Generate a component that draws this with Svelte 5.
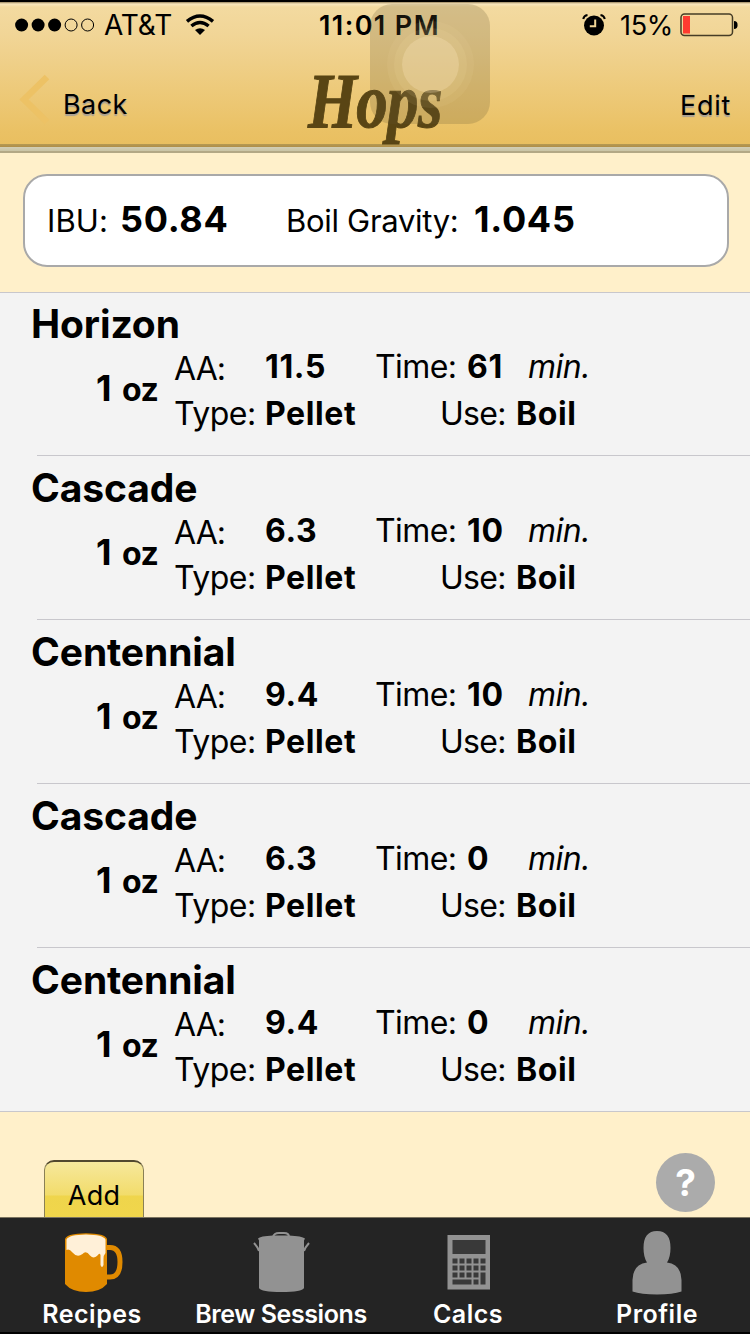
<script>
  const hops = [
    { name: 'Horizon', aa: '11.5', time: '61' },
    { name: 'Cascade', aa: '6.3', time: '10' },
    { name: 'Centennial', aa: '9.4', time: '10' },
    { name: 'Cascade', aa: '6.3', time: '0' },
    { name: 'Centennial', aa: '9.4', time: '0' }
  ];
  const keys = [0, 1, 2, 3, 4];
</script>

<div class="screen">
  <header>
    <div class="status">
      <svg class="signal" width="80" height="14" viewBox="0 0 80 14">
        {#each keys as i}
          <circle cx={6.6 + i * 16.5} cy="7" r={i < 3 ? 6.5 : 6} class:empty={i > 2} />
        {/each}
      </svg>
      <span class="carrier">AT&amp;T</span>
      <svg class="wifi" width="30" height="22" viewBox="0 0 30 22">
        <path d="M2 7.4 Q15 -3.6 28 7.4" />
        <path d="M6.4 12 Q15 4.8 23.6 12" />
        <path class="dot" d="M10 16 Q15 12.3 20 16 L15 21Z" />
      </svg>
      <span class="clock">11:01 PM</span>
      <svg class="alarm" width="24" height="22" viewBox="0 0 24 22">
        <circle cx="12" cy="11.5" r="10" />
        <path class="ear" d="M1.2 5 Q2 1.5 5.5 1 M18.5 1 Q22 1.5 22.8 5" />
        <path class="hand" d="M13.2 5.5 V12.3 H7.8" />
      </svg>
      <span class="percent">15%</span>
      <svg class="battery" width="58" height="24" viewBox="0 0 58 24">
        <rect class="case" x="1" y="1" width="51.5" height="21.5" rx="3.5" />
        <rect class="level" x="3" y="3" width="7" height="17.5" />
        <path d="M54 8 Q57.6 8 57.6 12 Q57.6 16 54 16Z" />
      </svg>
    </div>
    <nav>
      <svg class="chevron" width="32" height="52" viewBox="0 0 32 52">
        <path d="M28 3 L5 25.5 L28 48" />
      </svg>
      <span class="back">Back</span>
      <h1>Hops</h1>
      <span class="edit">Edit</span>
    </nav>
    <div class="touch"><i></i></div>
  </header>

  <section class="summary">
    <div class="box">
      <span class="ibu">IBU:</span><b class="ibu-value">50.84</b>
      <span class="gravity">Boil Gravity:</span><b class="gravity-value">1.045</b>
    </div>
  </section>

  <ul>
    {#each hops as hop}
      <li>
        <h2>{hop.name}</h2>
        <div class="details">
          <div class="amount"><b>1</b><span>oz</span></div>
          <div class="lines">
            <div class="line">
              <span class="aa">AA:</span>
              <b class="kind">{hop.aa}</b>
              <span class="time">Time:</span>
              <b class="minutes">{hop.time}</b>
              <em>min.</em>
            </div>
            <div class="line">
              <span class="type">Type:</span>
              <b class="kind">Pellet</b>
              <span class="use">Use:</span>
              <b class="boil">Boil</b>
            </div>
          </div>
        </div>
      </li>
    {/each}
  </ul>

  <section class="actions">
    <button class="add">Add</button>
    <button class="help">?</button>
  </section>

  <footer>
    <div class="tab recipes">
      <svg width="60" height="64" viewBox="0 0 60 64">
        <path class="handle" d="M42 16.5 H46 Q56 16.5 56 31 Q56 46 46 46 H42" />
        <path class="beer" d="M1 8 Q3 2.5 22 2.3 Q41 2.5 43 8 V53 Q36 61 22 61 Q8 61 1 53Z" />
        <path class="foam" d="M2.5 8.5 Q5 3.7 22 3.5 Q39 3.7 41.5 8.5 V22 Q39.5 24 39.5 28 V34 Q38 38 36.5 34 V24 Q35.5 21.5 34 24 Q30 28.5 26 24.5 Q22 19 18.5 23 Q13 27 8.5 21.5 Q5 17 2.5 19Z" />
      </svg>
      <span>Recipes</span>
    </div>
    <div class="tab brew">
      <svg width="60" height="64" viewBox="0 0 60 64">
        <path class="thin" d="M22 6 Q23 2 28 2 H33 Q38 2 38 6" />
        <path d="M7 7.5 Q9 5 22 4.5 H38 Q51 5 54 7.5 L53 9.5 V57 Q51 61 30.5 61 Q10 61 8 57 V9.5Z" />
        <path class="thin" d="M8 20 Q7 16.5 3 12 M53 20 Q54 16.5 58 12" />
      </svg>
      <span>Brew Sessions</span>
    </div>
    <div class="tab calcs">
      <svg width="60" height="64" viewBox="0 0 60 64">
        <path d="M8.5 4 H51 V58.5 H8.5Z" />
        <rect class="hole" x="13.5" y="9" width="33" height="14" />
        {#each keys as col}
          {#each keys.slice(0, col === 4 ? 2 : 3) as row}
            <rect class="hole" x={13.5 + col * 7} y={27.5 + row * 7} width="5" height="5" />
          {/each}
        {/each}
        <rect class="hole" x="13.5" y="48.5" width="19" height="5" />
        <rect class="hole" x="34.5" y="48.5" width="5" height="5" />
        <rect class="hole" x="41.5" y="41.5" width="5" height="12" />
      </svg>
      <span>Calcs</span>
    </div>
    <div class="tab profile">
      <svg width="60" height="64" viewBox="0 0 60 64">
        <path d="M30 0 Q43.5 0 43.5 17 Q43.5 26 40 31.5 Q54 33 54.5 49 V60.5 Q46 63.5 30 63.5 Q14 63.5 5.5 60.5 V49 Q6 33 20 31.5 Q16.5 26 16.5 17 Q16.5 0 30 0Z" />
      </svg>
      <span>Profile</span>
    </div>
  </footer>
</div>

<style>
  :global(body) {
    margin: 0;
  }
  .screen {
    width: 750px;
    height: 1334px;
    overflow: hidden;
    display: flex;
    flex-direction: column;
    background: #fff0ca;
    color: #000;
    font-family: Inter, "Liberation Sans", sans-serif;
  }
  header {
    position: relative;
    box-sizing: border-box;
    height: 153px;
    flex: none;
    border-top: 2px solid #000;
    background:
      linear-gradient(#b59a53, #b08e48) 0 142px / 100% 3px no-repeat,
      linear-gradient(#d2ceb5, #cac4a5) 0 145px / 100% 4px no-repeat,
      linear-gradient(#b3a885, #b3a885) 0 149px / 100% 2px no-repeat,
      linear-gradient(#97835c 0, #f9e7bd 2px, #f3daa0 5px, #f1d596 34px, #eac164 130px, #e9bf60 142px);
  }
  .status {
    display: flex;
    align-items: center;
    height: 46px;
    padding-left: 15px;
    font-size: 27px;
  }
  .status svg,
  .status span {
    flex: none;
  }
  .signal .empty {
    fill: none;
    stroke: #000;
    stroke-width: 1;
  }
  .carrier {
    width: 81px;
    margin-left: 9px;
    font-size: 28px;
    letter-spacing: -0.1px;
  }
  .wifi {
    fill: none;
    stroke: #000;
    stroke-width: 3.4;
  }
  .wifi .dot {
    fill: #000;
    stroke: none;
  }
  .clock {
    width: 140px;
    margin-left: 104px;
    font-weight: 600;
    letter-spacing: 1.4px;
  }
  .alarm {
    margin-left: 123px;
  }
  .alarm .ear,
  .alarm .hand {
    fill: none;
    stroke: #000;
    stroke-width: 2;
  }
  .alarm .hand {
    stroke: #f1d596;
  }
  .percent {
    width: 60px;
    margin-left: 14px;
    letter-spacing: -0.3px;
  }
  .battery .case {
    fill: none;
    stroke: #463c26;
    stroke-width: 1.5;
  }
  .battery .level {
    fill: #ff3b30;
  }
  nav {
    display: flex;
    height: 96px;
    padding-left: 19px;
    font-size: 27px;
    line-height: 34px;
    letter-spacing: 0.4px;
    text-shadow: 0 2px 1px #a9a093;
  }
  .chevron {
    flex: none;
    margin-top: 26px;
    fill: none;
    stroke: #edc265;
    stroke-width: 6.5;
  }
  .back {
    width: 245px;
    margin-top: 40px;
    padding-left: 12px;
  }
  h1 {
    width: 372px;
    margin: 12px 0 0;
    font: italic 700 78px/82px "Liberation Serif", serif;
    letter-spacing: -1px;
    color: #594514;
    text-shadow: none;
    transform: scaleX(0.81);
    transform-origin: 0 0;
    -webkit-text-stroke: 1px #594514;
  }
  .edit {
    margin-top: 41px;
    letter-spacing: 0.7px;
  }
  .touch {
    position: absolute;
    left: 370px;
    top: 2px;
    width: 120px;
    height: 120px;
    border-radius: 22px;
    background: rgba(100, 86, 52, 0.22);
    display: flex;
    align-items: center;
    justify-content: center;
  }
  .touch i {
    width: 57px;
    height: 57px;
    border-radius: 50%;
    background: rgba(255, 235, 190, 0.38);
    box-shadow:
      0 0 0 8px rgba(255, 235, 180, 0.1),
      0 0 0 15px rgba(255, 235, 180, 0.08);
  }
  .summary {
    box-sizing: border-box;
    height: 139px;
    flex: none;
    padding: 21px 21px 0 23px;
  }
  .box {
    box-sizing: border-box;
    height: 93px;
    display: flex;
    align-items: baseline;
    padding: 19px 0 0 22px;
    border: 2px solid #a9a9a9;
    border-radius: 24px;
    background: #fff;
    font-size: 31px;
    line-height: 48px;
    font-weight: 400;
    white-space: nowrap;
  }
  .box b {
    font-size: 36px;
    font-weight: 700;
    letter-spacing: 0.7px;
  }
  .ibu {
    width: 73px;
    letter-spacing: 0.1px;
  }
  .ibu-value {
    width: 166px;
  }
  .gravity {
    width: 188px;
    letter-spacing: -0.3px;
  }
  ul {
    flex: none;
    margin: 0;
    padding: 0;
    list-style: none;
    background: #f3f3f3;
    border-top: 1px solid #c8c7cc;
    border-bottom: 1px solid #c8c7cc;
  }
  li {
    box-sizing: border-box;
    height: 164px;
    padding: 12px 0 0 31px;
    background: linear-gradient(#c8c7cc, #c8c7cc) 37px 162px / 100% 1px no-repeat;
  }
  li:last-child {
    height: 162px;
    background: none;
  }
  h2 {
    margin: 0;
    font-size: 39px;
    line-height: 37px;
    padding-bottom: 1px;
    font-weight: 650;
    letter-spacing: -0.1px;
  }
  .details {
    display: flex;
    font-size: 32px;
    line-height: 47px;
  }
  .details b,
  .details em,
  .details span {
    white-space: nowrap;
    flex: none;
  }
  .amount {
    display: flex;
    align-items: baseline;
    box-sizing: border-box;
    width: 143px;
    padding: 22px 0 0 65px;
    font-weight: 650;
    letter-spacing: -0.6px;
  }
  .amount b {
    width: 26px;
    font-size: 36px;
    font-weight: 650;
  }
  .line {
    display: flex;
    height: 47px;
    font-weight: 400;
  }
  .line b {
    font-weight: 650;
    letter-spacing: 0.6px;
  }
  .aa {
    width: 91px;
    padding-top: 2px;
    letter-spacing: -0.9px;
  }
  .type {
    width: 91px;
    letter-spacing: -0.5px;
  }
  .kind {
    width: 110px;
  }
  .time {
    width: 92px;
    letter-spacing: -0.6px;
  }
  .minutes {
    width: 61px;
  }
  .use {
    width: 76px;
    padding-left: 65px;
    letter-spacing: -0.7px;
  }
  em {
    font-style: italic;
    letter-spacing: -0.5px;
  }
  .actions {
    flex: none;
    height: 105px;
    display: flex;
    justify-content: space-between;
    padding: 0 35px 0 44px;
    overflow: hidden;
  }
  button {
    box-sizing: border-box;
    padding: 0;
    font-family: inherit;
  }
  .add {
    width: 100px;
    height: 74px;
    margin-top: 48px;
    padding-bottom: 4px;
    border: 1px solid #8a8055;
    border-top: 2px solid #51482e;
    border-radius: 10px;
    background: linear-gradient(#f6e89c, #f2dc6b 33px, #efd54c 34px, #f2d74a);
    color: #000;
    font-size: 27px;
    line-height: 62px;
    letter-spacing: 0.3px;
  }
  .help {
    width: 59px;
    height: 59px;
    margin-top: 41px;
    border: 0;
    border-radius: 50%;
    background: #ababab;
    color: #fff;
    font-size: 37px;
    font-weight: 700;
    line-height: 58px;
  }
  footer {
    flex: 1;
    box-sizing: border-box;
    display: flex;
    border-top: 1px solid #7b745f;
    border-bottom: 2px solid #000;
    background: #242424;
    color: #fff;
  }
  .tab {
    flex: 1;
    display: flex;
    flex-direction: column;
    align-items: center;
    padding-top: 13px;
    font-size: 25px;
    line-height: 30px;
    font-weight: 600;
    letter-spacing: 0.5px;
    white-space: nowrap;
  }
  .recipes,
  .calcs {
    padding-right: 2px;
    margin-left: -1px;
    margin-right: 1px;
  }
  .recipes svg {
    margin-left: 3px;
  }
  .calcs svg {
    margin-left: 2px;
  }
  .brew {
    padding-right: 2px;
  }
  .brew svg {
    margin-right: 1px;
  }
  .brew span {
    letter-spacing: -0.4px;
  }
  .tab svg {
    flex: none;
    margin-bottom: 4px;
    fill: #929292;
  }
  .tab .thin {
    fill: none;
    stroke: #929292;
    stroke-width: 2;
  }
  .tab .hole {
    fill: #393939;
  }
  .tab .handle {
    fill: none;
    stroke: #e08a00;
    stroke-width: 5;
  }
  .tab .beer {
    fill: #e08a00;
  }
  .tab .foam {
    fill: #fff0d8;
  }
</style>
